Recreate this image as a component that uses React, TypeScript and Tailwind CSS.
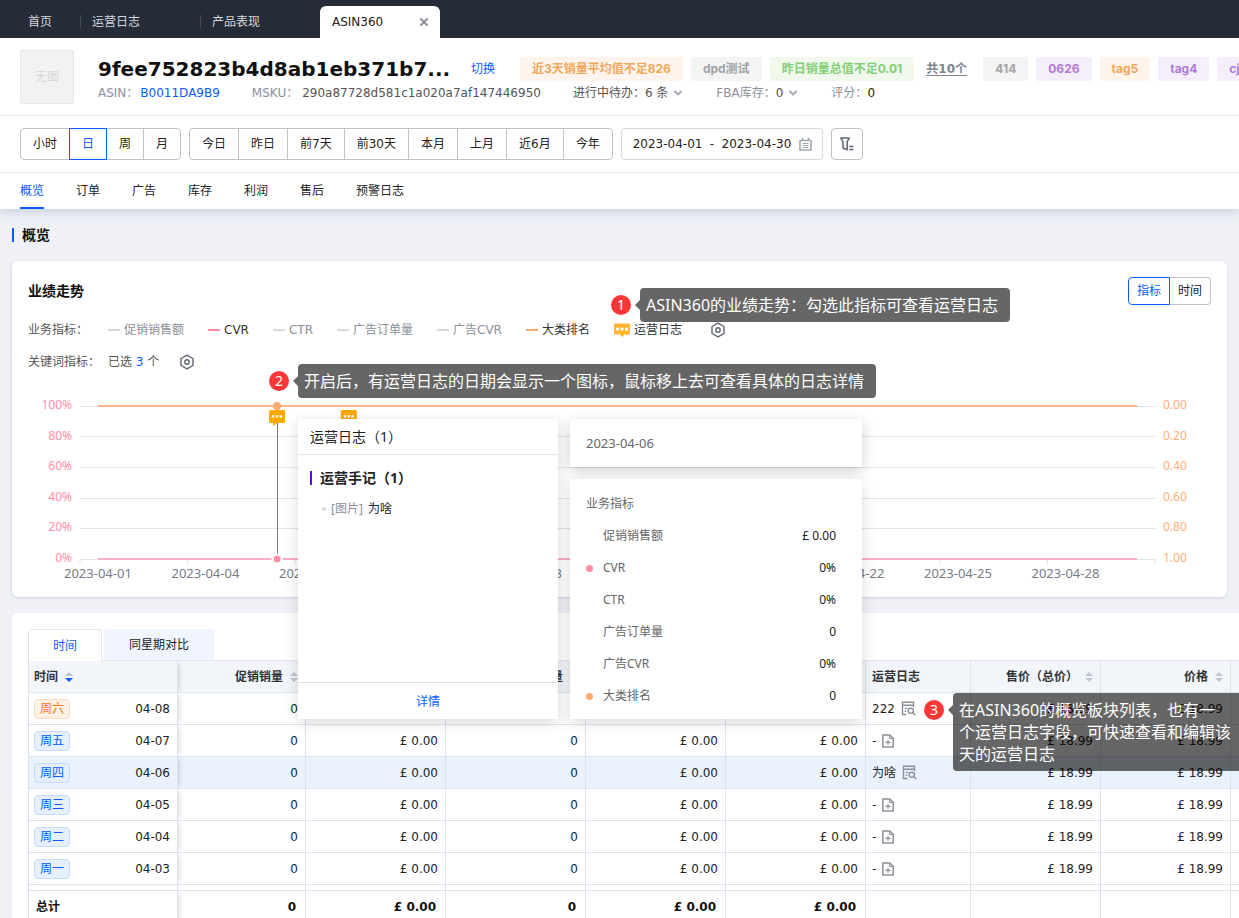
import { useState } from 'react';
import type { ReactNode } from 'react';
import { ChevronDown, X } from 'lucide-react';

const openTabs = ['运营日志', '产品表现'];
const units = ['小时', '日', '周', '月'];
const ranges = ['今日', '昨日', '前7天', '前30天', '本月', '上月', '近6月', '今年'];
const sections = ['概览', '订单', '广告', '库存', '利润', '售后', '预警日志'];

const orangeTag = 'bg-[#fff4eb] text-[#f0a75e]';
const grayTag = 'bg-[#f4f4f4] text-[#a3a3a3]';
const greenTag = 'bg-[#f0f9ec] text-[#82cf74]';
const purpleTag = 'bg-[#f5effc] text-[#b07bd8]';

const alertTags = [
  { label: '近3天销量平均值不足826', tone: orangeTag },
  { label: 'dpd测试', tone: grayTag },
  { label: '昨日销量总值不足0.01', tone: greenTag },
];

const customTags = [
  { label: '414', tone: grayTag },
  { label: '0626', tone: purpleTag },
  { label: 'tag5', tone: orangeTag },
  { label: 'tag4', tone: purpleTag },
  { label: 'cj', tone: purpleTag },
];

const legend = [
  { label: '促销销售额', line: 'bg-[#d5d8de]', text: 'text-[#8b8f99]' },
  { label: 'CVR', line: 'bg-[#ff8fa8]', text: 'text-[#333]' },
  { label: 'CTR', line: 'bg-[#d5d8de]', text: 'text-[#8b8f99]' },
  { label: '广告订单量', line: 'bg-[#d5d8de]', text: 'text-[#8b8f99]' },
  { label: '广告CVR', line: 'bg-[#d5d8de]', text: 'text-[#8b8f99]' },
  { label: '大类排名', line: 'bg-[#ffa970]', text: 'text-[#333]' },
];

const percentTicks = ['100%', '80%', '60%', '40%', '20%', '0%'];
const rankTicks = ['0.00', '0.20', '0.40', '0.60', '0.80', '1.00'];
const dateTicks = ['01', '04', '07', '10', '13', '16', '19', '22', '25', '28'];
const gridLines = [10, 40, 71, 102, 132, 163];

const metrics = [
  { label: '促销销售额', value: '£ 0.00', dot: '' },
  { label: 'CVR', value: '0%', dot: 'bg-[#ff8fa8]' },
  { label: 'CTR', value: '0%', dot: '' },
  { label: '广告订单量', value: '0', dot: '' },
  { label: '广告CVR', value: '0%', dot: '' },
  { label: '大类排名', value: '0', dot: 'bg-[#ffa970]' },
];

const columns = ['促销销量', '促销销售额', '促销订单量', '广告销售额', '广告花费'];

const rows = [
  { day: '周六', date: '04-08', log: '222' },
  { day: '周五', date: '04-07', log: '' },
  { day: '周四', date: '04-06', log: '为啥' },
  { day: '周三', date: '04-05', log: '' },
  { day: '周二', date: '04-04', log: '' },
  { day: '周一', date: '04-03', log: '' },
];

const values = ['0', '£ 0.00', '0', '£ 0.00', '£ 0.00'];

function SettingIcon() {
  return (
    <svg className="h-4 w-4" viewBox="0 0 16 16" fill="none" stroke="#5f6470" strokeWidth="1.4">
      <path d="M8 1.2 14 4.5v7L8 14.8 2 11.5v-7Z" strokeLinejoin="round" />
      <circle cx="8" cy="8" r="2.2" />
    </svg>
  );
}

function CalendarIcon() {
  return (
    <svg className="h-[13px] w-[13px]" viewBox="0 0 13 13" fill="none" stroke="#a3a8b3">
      <path d="M1 2.5h11v9.5H1Z" strokeWidth="1.6" />
      <path d="M3.5 0v3M9.5 0v3" strokeWidth="1.8" />
      <path d="M3.5 5.5h6M3.5 7.5h6M3.5 9.5h6" />
    </svg>
  );
}

function FilterIcon() {
  return (
    <svg className="h-[14px] w-[14px]" viewBox="0 0 14 14" fill="none" stroke="#5f6470" strokeWidth="1.5">
      <path d="M.8 1.1h8.4L7.2 4.6v8.2L3 11V4.6Z" strokeLinejoin="round" />
      <path d="M9.3 9.4h4.2M9.3 12.4h4.2" />
    </svg>
  );
}

function ViewLogIcon() {
  return (
    <svg className="h-[15px] w-[15px]" viewBox="0 0 15 15" fill="none" stroke="#8b8f99" strokeWidth="1.4">
      <path d="M5.5 13.5h-4V1.2h11v5M1.5 4.2h11M3.8 7.4h2.4M3.8 10.3h1.4" />
      <circle cx="9.8" cy="9.8" r="2.6" />
      <path d="m11.8 11.8 2.6 2.4" />
    </svg>
  );
}

function AddLogIcon() {
  return (
    <svg className="h-[14px] w-3" viewBox="0 0 12 14" fill="none" stroke="#8b8f99" strokeWidth="1.5">
      <path d="M.8 1h6.9l3.5 3.4V13H.8Z" strokeLinejoin="round" />
      <path d="M7.4 1v3.6h3.8" strokeWidth="1" />
      <path d="M6 5.8v5M3.5 8.3h5" strokeWidth="1.2" />
    </svg>
  );
}

function BubbleIcon() {
  return (
    <svg className="h-[14px] w-4" viewBox="0 0 16 14">
      <path d="M1 .5h14a1 1 0 0 1 1 1v9a1 1 0 0 1-1 1h-4.5L8 14l-2-2.5H1a1 1 0 0 1-1-1v-9a1 1 0 0 1 1-1Z" fill="#ffb534" />
      <path d="M2.2 4.8h2.8v2.6H2.2zM6.6 4.8h2.8v2.6H6.6zM11 4.8h2.8v2.6H11z" fill="#fff" />
    </svg>
  );
}

function SortIcon({ desc = false }: { desc?: boolean }) {
  return (
    <svg className="h-[10px] w-2 shrink-0" viewBox="0 0 8 10">
      <path d="M4 0 8 4H0Z" fill="#c0c4cc" />
      <path d="M4 10 0 6h8Z" fill={desc ? '#0b5cff' : '#c0c4cc'} />
    </svg>
  );
}

// Numbered dot with the dark speech box beside it
function Callout({ step, className, children }: { step: number; className: string; children: ReactNode }) {
  return (
    <div className={`absolute flex items-start ${className}`}>
      <span className="mt-[7px] flex h-5 w-5 items-center justify-center rounded-full bg-[#fd3737] font-['Noto_Sans'] text-sm leading-5 text-white">
        {step}
      </span>
      <span className="mt-3 ml-1 border-y-[5px] border-r-[5px] border-y-transparent border-r-black/60" />
      <p className="rounded-sm bg-black/60 py-[6px] pr-3 pl-[6px] font-['Noto_Sans','Noto_Sans_CJK_SC',sans-serif] text-base leading-[22px] whitespace-nowrap text-white">
        {children}
      </p>
    </div>
  );
}

function ButtonGroup({ items, active, onPick }: { items: string[]; active?: string; onPick?: (item: string) => void }) {
  return (
    <div className="flex">
      {items.map(item => (
        <button
          key={item}
          onClick={() => onPick?.(item)}
          className={`-ml-px h-8 border px-3 first:ml-0 first:rounded-l last:rounded-r ${
            item === active ? 'relative border-[#0b5cff] text-[#0b5cff]' : 'border-[#c0c3ca] text-[#222]'
          }`}
        >
          {item}
        </button>
      ))}
    </div>
  );
}

function Tag({ label, tone }: { label: string; tone: string }) {
  return (
    <span className={`h-6 shrink-0 rounded-xs px-3 font-['Inter','Noto_Sans_CJK_SC',sans-serif] leading-6 font-bold ${tone}`}>
      {label}
    </span>
  );
}

function TopTabs() {
  return (
    <nav className="flex h-[38px] items-end bg-[#252b37] text-[#d5d8de]">
      <a href="#home" className="flex h-8 w-20 items-center pl-7">首页</a>
      {openTabs.map(tab => (
        <a key={tab} href={`#${tab}`} className="flex h-8 w-[120px] items-center">
          <span className="h-[14px] border-l border-[#454b57]" />
          <span className="pl-[11px]">{tab}</span>
        </a>
      ))}
      <div className="flex h-8 w-[120px] items-center justify-between rounded-t-md bg-white pr-[10px] pl-3 text-[#222]">
        <a href="#asin360">ASIN360</a>
        <button aria-label="关闭">
          <X className="h-3 w-3 text-[#8b8f99]" strokeWidth={4} />
        </button>
      </div>
    </nav>
  );
}

function ProductHeader() {
  return (
    <header className="flex gap-6 border-b border-[#e9ebf0] pt-3 pb-[10px] pl-5">
      <div className="flex h-[54px] w-[54px] shrink-0 items-center justify-center rounded-xs border border-[#e6e6e6] bg-[#f2f2f2] text-[#d8d8d8]">
        无图
      </div>
      <div className="min-w-0 flex-1 overflow-hidden pt-[7px]">
        <div className="flex h-6 items-center gap-2">
          <h1 className="w-[352px] shrink-0 text-xl leading-6 font-bold whitespace-nowrap text-[#111]">
            9fee752823b4d8ab1eb371b7...
          </h1>
          <a href="#switch" className="ml-[13px] w-[41px] shrink-0 text-[#0b5cff]">切换</a>
          {alertTags.map(tag => (
            <Tag key={tag.label} {...tag} />
          ))}
          <a href="#tags" className="ml-1 w-[49px] shrink-0 font-bold text-[#7f8490] underline underline-offset-2">共10个</a>
          {customTags.map(tag => (
            <Tag key={tag.label} {...tag} />
          ))}
        </div>
        <div className="flex h-6 items-center gap-8 whitespace-nowrap text-[#8b8f99]">
          <span>
            ASIN：<a href="#asin" className="ml-[2px] text-[#0b5cff]">B0011DA9B9</a>
          </span>
          <span>
            MSKU：<span className="ml-1 text-[#555]">290a87728d581c1a020a7af147446950</span>
          </span>
          <button className="flex items-center text-[#555]">
            进行中待办：6 条
            <ChevronDown className="ml-1 h-3 w-3 text-[#a3a8b3]" strokeWidth={4} />
          </button>
          <button className="flex items-center">
            FBA库存：<span className="text-[#555]">0</span>
            <ChevronDown className="ml-1 h-3 w-3 text-[#a3a8b3]" strokeWidth={4} />
          </button>
          <span>
            评分：<span className="text-[#222]">0</span>
          </span>
        </div>
      </div>
    </header>
  );
}

function TrendTooltip() {
  return (
    <div className="absolute top-[158px] left-[286px] flex gap-3 font-['Noto_Sans','Noto_Sans_CJK_SC',sans-serif]">
      <div className="flex h-[300px] w-[260px] flex-col bg-white shadow-[0_4px_14px_rgba(0,0,0,0.14)]">
        <h3 className="border-b border-[#e4e6ea] px-3 pt-2 pb-[7px] text-sm text-[#222]">运营日志（1）</h3>
        <div className="flex-1 px-3 pt-3">
          <h4 className="flex items-center gap-2 text-sm leading-[22px] font-bold text-[#222]">
            <span className="h-[14px] w-[2px] bg-[#5b0be0]" />
            运营手记（1）
          </h4>
          <p className="flex items-center pt-3 pl-3 text-[#222]">
            <span className="mr-[5px] h-1 w-1 rounded-full bg-[#d5d8de]" />
            <span className="mr-[5px] text-[#8b8f99]">[图片]</span>
            为啥
          </p>
        </div>
        <a href="#detail" className="border-t border-[#dcdfe4] pt-[10px] pb-2 text-center leading-[18px] text-[#0b5cff]">详情</a>
      </div>
      <div className="flex w-[292px] flex-col gap-3">
        <div className="h-12 bg-white px-4 text-[13px] leading-[48px] text-[#666] shadow-[0_4px_14px_rgba(0,0,0,0.18)]">2023-04-06</div>
        <div className="bg-white pt-[9px] pr-[26px] pb-[7px] pl-4 text-[#666] shadow-[0_4px_14px_rgba(0,0,0,0.14)]">
          <h3 className="leading-8">业务指标</h3>
          {metrics.map(({ label, value, dot }) => (
            <div key={label} className="flex h-8 items-center">
              <span className={`mr-[10px] h-[7px] w-[7px] rounded-full ${dot}`} />
              {label}
              <span className="ml-auto text-[#222]">{value}</span>
            </div>
          ))}
        </div>
      </div>
    </div>
  );
}

function TrendChart() {
  return (
    <div className="flex gap-2 pt-[18px] font-['Noto_Sans',sans-serif]">
      <div className="flex h-[171px] w-11 flex-col justify-between text-right text-[#ff8fa8]">
        {percentTicks.map(t => <span key={t} className="leading-[18px]">{t}</span>)}
      </div>
      <div className="flex-1">
        <svg className="h-[168px] w-full overflow-visible">
          {gridLines.map(y => (
            <line key={y} x1="0" x2="100%" y1={y + 0.5} y2={y + 0.5} stroke="#dfe4f0" />
          ))}
          {dateTicks.map((t, i) => (
            <line key={t} x1={`${i * 10}%`} x2={`${i * 10}%`} y1="164" y2="168" stroke="#dfe4f0" />
          ))}
          <line x1="100%" x2="100%" y1="164" y2="168" stroke="#dfe4f0" />
          <line x1="1.67%" x2="98.33%" y1="10" y2="10" stroke="#fcb78d" strokeWidth="2" />
          <line x1="1.67%" x2="98.33%" y1="163" y2="163" stroke="#fbafc2" strokeWidth="2" />
          <line x1="18.37%" x2="18.37%" y1="10" y2="163" stroke="#777" />
          <circle cx="18.33%" cy="10" r="4" fill="#ffa970" />
          <circle cx="18.33%" cy="163" r="4.5" fill="#ff8fa8" stroke="#fff" strokeWidth="2" />
          {['18.33%', '25%'].map(x => (
            <svg key={x} x={x} y="14" overflow="visible">
              <path d="M-7 0H7a1 1 0 0 1 1 1v11a1 1 0 0 1-1 1H0l-4 3v-3h-3a1 1 0 0 1-1-1V1a1 1 0 0 1 1-1Z" fill="#ffa800" />
              <path d="M-5 5.2h2.4v2.4H-5zM-1.2 5.2h2.4v2.4h-2.4zM2.6 5.2H5v2.4H2.6z" fill="#fff" />
            </svg>
          ))}
        </svg>
        <div className="grid grid-cols-10 text-[13px] leading-[18px] text-[#777c87]">
          {dateTicks.map(t => (
            <span key={t} className="flex w-1/3 justify-center whitespace-nowrap">2023-04-{t}</span>
          ))}
        </div>
      </div>
      <div className="flex h-[171px] w-12 flex-col justify-between text-[#ffad7a]">
        {rankTicks.map(t => <span key={t} className="leading-[18px]">{t}</span>)}
      </div>
    </div>
  );
}

function TrendCard() {
  return (
    <section className="relative z-10 rounded-md bg-white p-4 pb-[15px] shadow-[0_1px_3px_rgba(60,90,150,0.2)]">
      <div className="flex justify-between">
        <h2 className="text-sm leading-7 font-bold text-[#111]">业绩走势</h2>
        <div className="flex">
          <button className="h-7 w-[42px] rounded-l border border-[#0b5cff] text-[#0b5cff]">指标</button>
          <button className="h-7 w-[41px] rounded-r border border-l-0 border-[#c0c3ca] text-[#222]">时间</button>
        </div>
      </div>
      <div className="mt-[9px] flex h-8 items-center gap-6">
        <span className="-mr-4 w-[72px] text-[#555]">业务指标：</span>
        {legend.map(({ label, line, text }) => (
          <button key={label} className={`flex items-center gap-1 ${text}`}>
            <span className={`h-[2px] w-3 ${line}`} />
            {label}
          </button>
        ))}
        <button className="flex items-center gap-1 text-[#333]">
          <BubbleIcon />
          运营日志
        </button>
        <button aria-label="设置业务指标" className="ml-1">
          <SettingIcon />
        </button>
      </div>
      <div className="flex h-8 items-center text-[#555]">
        <span className="w-20">关键词指标：</span>
        <span>
          已选 <span className="text-[#0b5cff]">3</span> 个
        </span>
        <button aria-label="设置关键词指标" className="ml-5">
          <SettingIcon />
        </button>
      </div>
      <TrendChart />
      <TrendTooltip />
      <Callout step={1} className="top-[27px] left-[599px]">ASIN360的业绩走势：勾选此指标可查看运营日志</Callout>
      <Callout step={2} className="top-[103px] left-[257px]">开启后，有运营日志的日期会显示一个图标，鼠标移上去可查看具体的日志详情</Callout>
    </section>
  );
}

const cell = 'border-r border-b border-[#dde2ee] pr-[7px] pl-[6px]';
const frozen = 'border-r border-b border-[#dde2ee] pr-[7px] pl-[5px] shadow-[5px_0_4px_-3px_rgba(0,0,0,0.12)]';
const totalCell = 'border-r border-b border-[#dde2ee] pr-[9px]';

function LogTable() {
  return (
    <table className="w-full table-fixed border-separate border-spacing-0 border-l border-[#dde2ee] text-right text-[#222]">
      <colgroup>
        <col className="w-[149px]" />
        <col className="w-32" />
        <col className="w-[140px]" />
        <col className="w-[140px]" />
        <col className="w-[140px]" />
        <col className="w-[140px]" />
        <col className="w-[105px]" />
        <col className="w-[130px]" />
        <col className="w-[130px]" />
        <col />
      </colgroup>
      <thead>
        <tr className="h-8 bg-[#f2f5fa] text-[#333]">
          <th className={frozen}>
            <span className="flex items-center gap-[7px]">时间 <SortIcon desc /></span>
          </th>
          {columns.map(name => (
            <th key={name} className={cell}>
              <span className="flex items-center justify-end gap-[7px]">{name} <SortIcon /></span>
            </th>
          ))}
          <th className={`${cell} text-left`}>运营日志</th>
          {['售价（总价）', '价格'].map(name => (
            <th key={name} className={cell}>
              <span className="flex items-center justify-end gap-[7px]">{name} <SortIcon /></span>
            </th>
          ))}
          <th className="border-b border-[#dde2ee]" />
        </tr>
      </thead>
      <tbody>
        {rows.map(({ day, date, log }) => (
          <tr key={day} className={`h-8 ${day === '周四' ? 'bg-[#eaf2fe]' : ''}`}>
            <td className={frozen}>
              <span className="flex items-center justify-between">
                <span
                  className={`rounded-sm border px-[5px] leading-[18px] ${
                    day === '周六' ? 'border-[#ffdcbd] bg-[#fff1e4] text-[#f5790b]' : 'border-[#c5dafc] bg-[#e5effe] text-[#0b5cff]'
                  }`}
                >
                  {day}
                </span>
                {date}
              </span>
            </td>
            {values.map((value, i) => (
              <td key={i} className={cell}>{value}</td>
            ))}
            <td className={cell}>
              <span className="flex items-center gap-[6px]">
                {log || '-'}
                <button aria-label={log ? '查看日志' : '添加日志'}>{log ? <ViewLogIcon /> : <AddLogIcon />}</button>
              </span>
            </td>
            <td className={cell}>£ 18.99</td>
            <td className={cell}>£ 18.99</td>
            <td className="border-b border-[#dde2ee]" />
          </tr>
        ))}
        <tr className="h-[6px]">
          <td className={frozen} />
          {values.map((_, i) => <td key={i} className={cell} />)}
          <td className={cell} />
          <td className={cell} />
          <td className={cell} />
          <td className="border-b border-[#dde2ee]" />
        </tr>
      </tbody>
      <tfoot>
        <tr className="h-8 font-bold text-[#111]">
          <td className={frozen}>
            <span className="flex pl-[2px]">总计</span>
          </td>
          {values.map((value, i) => (
            <td key={i} className={totalCell}>{value}</td>
          ))}
          <td className={totalCell} />
          <td className={totalCell} />
          <td className={totalCell} />
          <td className="border-b border-[#dde2ee]" />
        </tr>
      </tfoot>
    </table>
  );
}

export default function App() {
  const [unit, setUnit] = useState('日');
  const [section, setSection] = useState('概览');

  return (
    <div className="flex h-screen flex-col overflow-hidden bg-[#eff1f6] font-['DejaVu_Sans','Noto_Sans_CJK_SC',sans-serif] text-xs">
      <div className="relative shrink-0 bg-white shadow-[0_2px_12px_rgba(60,90,150,0.25)]">
        <TopTabs />
        <ProductHeader />
        <div className="flex gap-2 border-b border-[#e3e7f3] px-5 py-3">
          <ButtonGroup items={units} active={unit} onPick={setUnit} />
          <ButtonGroup items={ranges} />
          <button className="flex h-8 w-[202px] items-center justify-between rounded border border-[#d5d8de] pr-[10px] pl-[11px] text-[#222]">
            <span>2023-04-01</span>
            <span>-</span>
            <span>2023-04-30</span>
            <CalendarIcon />
          </button>
          <button aria-label="筛选" className="flex h-8 w-8 items-center justify-center rounded border border-[#c0c3ca]">
            <FilterIcon />
          </button>
        </div>
        <nav className="flex h-9 gap-8 px-5">
          {sections.map(name => (
            <a
              key={name}
              href={`#${name}`}
              onClick={() => setSection(name)}
              className={`border-b-2 pt-px leading-[34px] ${
                name === section ? 'border-[#0b5cff] text-[#0b5cff]' : 'border-transparent text-[#222]'
              }`}
            >
              {name}
            </a>
          ))}
        </nav>
      </div>

      <main className="flex-1 overflow-hidden px-3">
        <h2 className="flex items-center gap-2 pt-4 pb-4 text-sm font-bold text-[#111]">
          <span className="h-[14px] w-[2px] bg-[#0b5cff]" />
          概览
        </h2>
        <TrendCard />
        <section className="relative mt-4 -mr-3 rounded-tl-md bg-white pt-4 pl-4">
          <div className="flex h-8 items-end gap-[2px] border-b border-[#e3e5e9]">
            <button className="-mb-px h-8 w-[74px] rounded-t border border-b-0 border-[#e3e5e9] bg-white text-[#0b5cff]">时间</button>
            <button className="h-[31px] w-[110px] rounded-t bg-[#f0f5ff] text-[#222]">同星期对比</button>
          </div>
          <LogTable />
          <Callout step={3} className="top-20 left-[912px]">
            在ASIN360的概览板块列表，也有一
            <br />
            个运营日志字段，可快速查看和编辑该
            <br />
            天的运营日志
          </Callout>
        </section>
      </main>
    </div>
  );
}
